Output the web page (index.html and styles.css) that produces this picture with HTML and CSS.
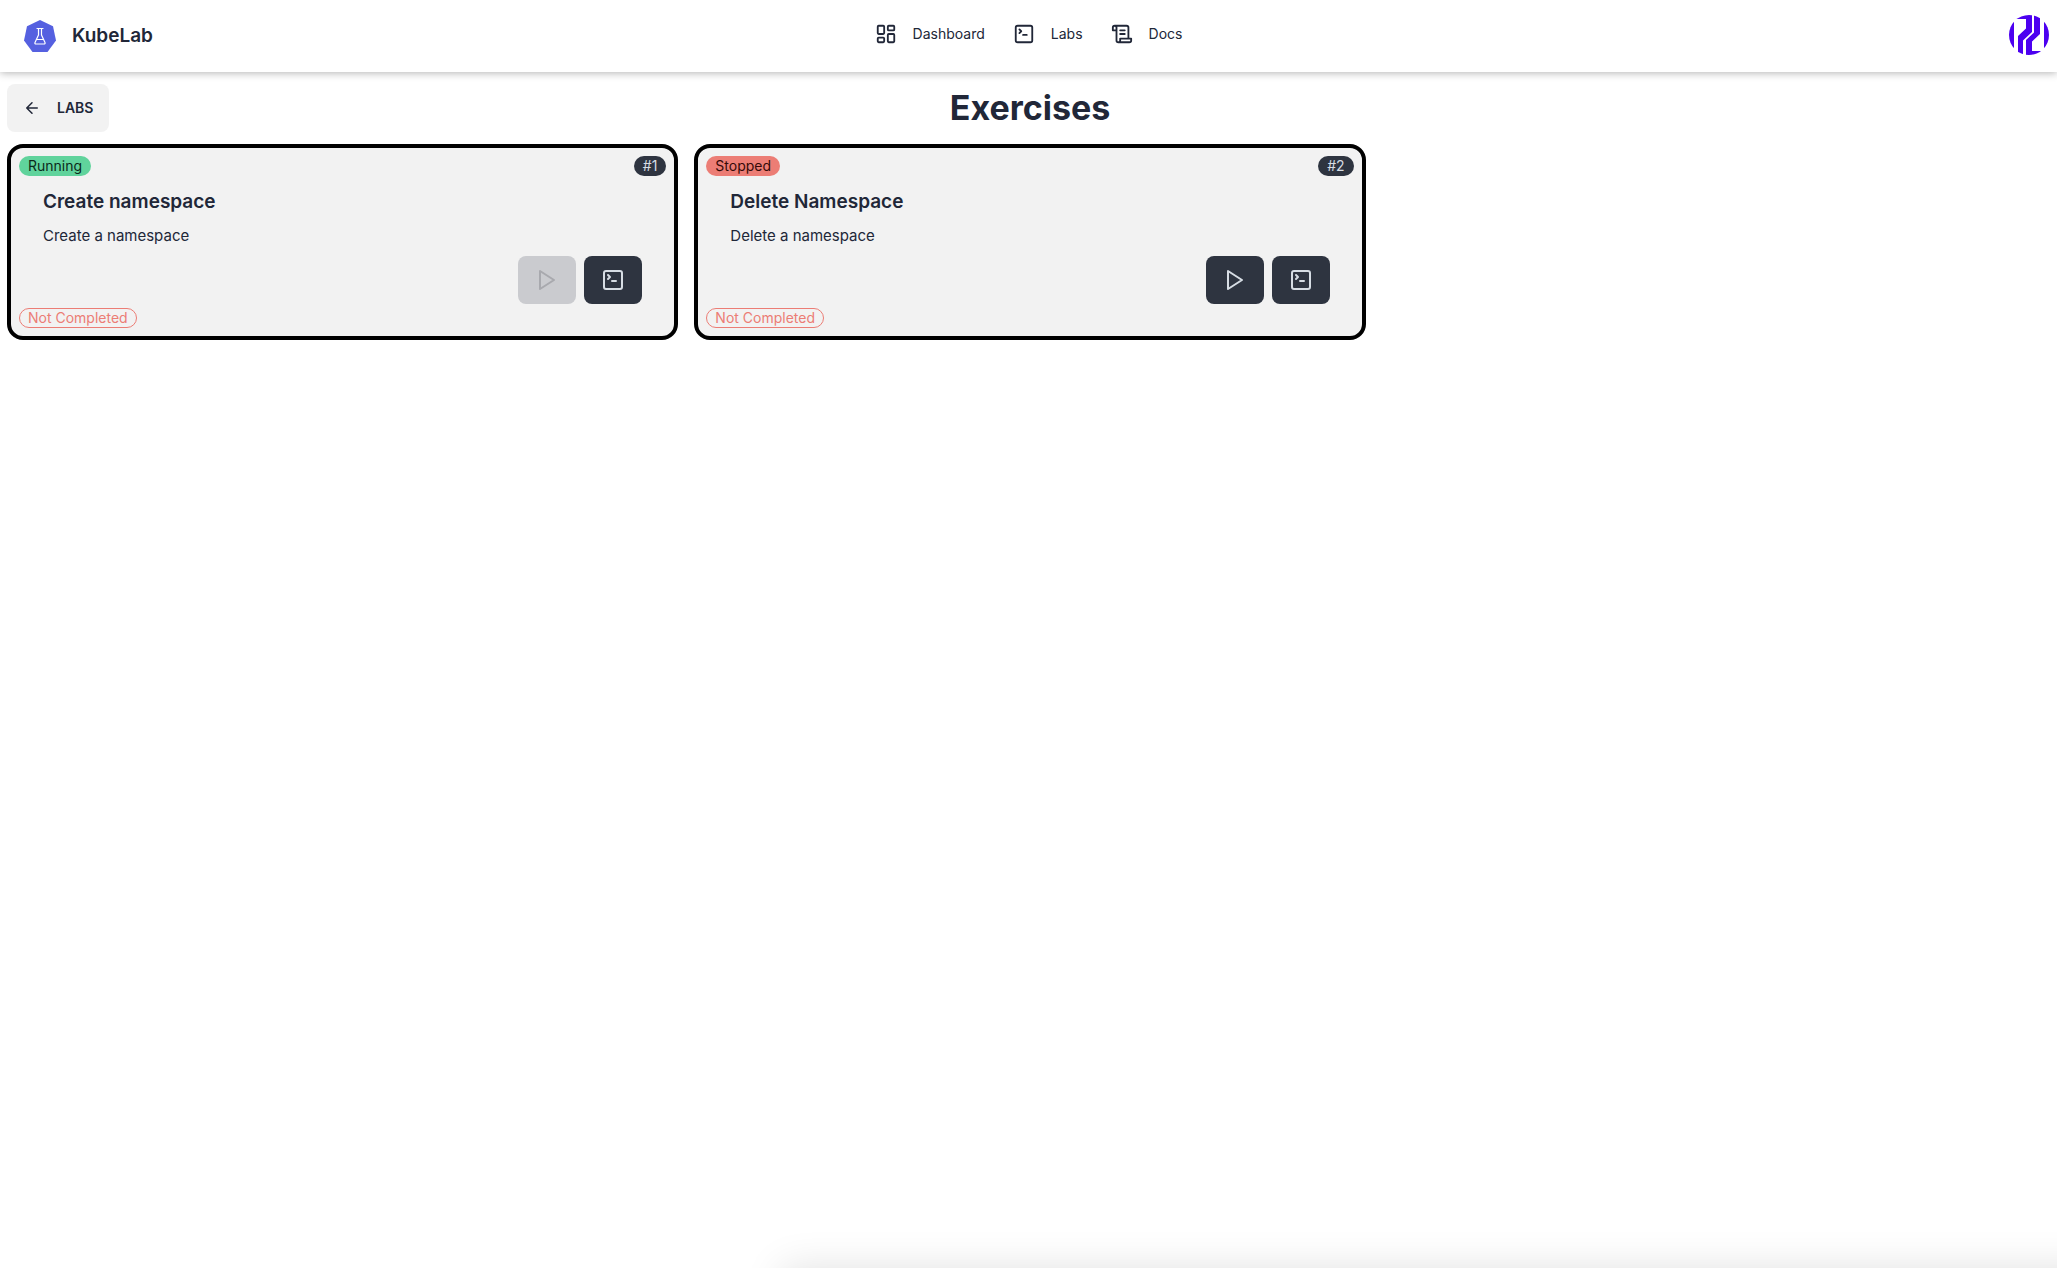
FILE: index.html
```html
<!DOCTYPE html>
<html lang="en">
<head>
<meta charset="utf-8">
<meta name="viewport" content="width=device-width, initial-scale=1">
<title>KubeLab</title>
<link rel="stylesheet" href="styles.css">
</head>
<body>
<svg class="sprite" aria-hidden="true">
  <symbol id="terminal" viewBox="0 0 24 24"><path d="m7 11 2-2-2-2M11 13h4"/><rect width="18" height="18" x="3" y="3" rx="2"/></symbol>
  <symbol id="play" viewBox="0 0 24 24"><path d="M5 3l14 9-14 9z"/></symbol>
</svg>
<header class="navbar">
  <a class="brand" href="#">
    <svg class="logo" viewBox="0 0 32 32" aria-hidden="true">
      <path fill="#5560e0" d="M16 0 29 6.300 32 20.500 23.500 32H8.500L0 20.500 3 6.300z"/>
      <path fill="none" stroke="#fff" stroke-width="1.200" d="M13 8.500h6M14.500 8.500v6.500L11 22.500q-.5 1.500 1 1.500h8q1.500 0 1-1.500L17.500 15V8.500M12.500 19.500h7"/>
    </svg>
    <span>KubeLab</span>
  </a>
  <nav class="menu">
    <a href="#"><svg class="icon" viewBox="0 0 24 24" aria-hidden="true"><rect width="7" height="9" x="3" y="3" rx="1"/><rect width="7" height="5" x="14" y="3" rx="1"/><rect width="7" height="9" x="14" y="12" rx="1"/><rect width="7" height="5" x="3" y="16" rx="1"/></svg>Dashboard</a>
    <a href="#"><svg class="icon" aria-hidden="true"><use href="#terminal"/></svg>Labs</a>
    <a href="#"><svg class="icon" viewBox="0 0 24 24" aria-hidden="true"><path d="M8 21h12a2 2 0 0 0 2-2v-2H10v2a2 2 0 1 1-4 0V5a2 2 0 1 0-4 0v3h4M19 17V5a2 2 0 0 0-2-2H4M15 8h-5M15 12h-5"/></svg>Docs</a>
  </nav>
  <button class="avatar" type="button" aria-label="Account">
    <svg viewBox="0 0 40 40" aria-hidden="true">
      <clipPath id="round"><circle cx="20" cy="20" r="20"/></clipPath>
      <g clip-path="url(#round)" fill="#4c00f0">
        <path d="M0 0h5v40H0zM35 0h5v40h-5zM5 0h18v17L14 25.500V40H9V21l8-7.500V4H5zM25 0h6v19l-8 7.500V36h12v4H17V25l8-7.500z"/>
      </g>
    </svg>
  </button>
</header>
<main class="page">
  <div class="heading">
    <a class="back" href="#"><svg viewBox="0 0 24 24" aria-hidden="true"><path d="m12 19-7-7 7-7M19 12H5"/></svg>LABS</a>
    <h1>Exercises</h1>
  </div>
  <div class="cards">
    <article class="card">
      <div class="row"><span class="badge running">Running</span><span class="badge number">#1</span></div>
      <div class="body">
        <h2>Create namespace</h2>
        <p>Create a namespace</p>
        <div class="actions">
          <button type="button" disabled aria-label="Start"><svg><use href="#play"/></svg></button>
          <button type="button" aria-label="Open terminal"><svg><use href="#terminal"/></svg></button>
        </div>
      </div>
      <div class="row"><span class="badge pending">Not Completed</span></div>
    </article>
    <article class="card">
      <div class="row"><span class="badge stopped">Stopped</span><span class="badge number">#2</span></div>
      <div class="body">
        <h2>Delete Namespace</h2>
        <p>Delete a namespace</p>
        <div class="actions">
          <button type="button" aria-label="Start"><svg><use href="#play"/></svg></button>
          <button type="button" aria-label="Open terminal"><svg><use href="#terminal"/></svg></button>
        </div>
      </div>
      <div class="row"><span class="badge pending">Not Completed</span></div>
    </article>
  </div>
</main>
<div class="bottom-shadow"></div>
</body>
</html>
```
FILE: styles.css
```css
* { box-sizing: border-box; }
body {
  margin: 0;
  min-height: 100vh;
  background: #fff;
  color: #212738;
  font: 15px/24px Inter, "Liberation Sans", sans-serif;
}
a { color: inherit; text-decoration: none; }
h1, h2, p { margin: 0; }
svg { fill: none; stroke: currentColor; stroke-width: 2; stroke-linecap: round; stroke-linejoin: round; flex: none; }
.sprite { display: none; }

.navbar {
  display: grid;
  grid-template-columns: 1fr auto 1fr;
  align-items: center;
  height: 72px;
  padding: 0 8px 0 24px;
  box-shadow: 0 1px 8px rgba(0, 0, 0, .3);
}
.brand { display: flex; align-items: center; gap: 16px; font-size: 19px; line-height: 28px; font-weight: 600; }
.logo { width: 32px; height: 32px; stroke: none; }
.menu { display: flex; gap: 28px; padding: 0 16px 4px 0; font-size: 14px; line-height: 20px; }
.menu a { display: flex; align-items: center; gap: 16px; }
.icon { width: 22px; height: 22px; }
.avatar { justify-self: end; display: block; width: 40px; height: 40px; margin-bottom: 2px; padding: 0; border: 0; background: none; }
.avatar svg { display: block; width: 40px; height: 40px; stroke: none; }

.page { padding: 12px 4px 12px 7px; }
.heading { display: grid; grid-template-columns: 1fr auto 1fr; align-items: center; }
.heading h1 { font-size: 34px; line-height: 40px; font-weight: 700; }
.back {
  justify-self: start;
  display: flex;
  align-items: center;
  gap: 16px;
  height: 48px;
  padding: 0 16px;
  border-radius: 8px;
  background: #f2f2f2;
  font-size: 14px;
  font-weight: 600;
}
.back svg { width: 18px; height: 18px; }

.cards { display: grid; grid-template-columns: repeat(3, 1fr); gap: 16px; margin-top: 12px; }
.card { padding: 8px; border: 4px solid #000; border-radius: 16px; background: #f2f2f2; }
.row { display: flex; justify-content: space-between; }
.badge { height: 20px; padding: 0 8px; border: 1px solid transparent; border-radius: 10px; font-size: 14px; line-height: 18px; }
.running { background: #60d39c; color: #0b2a1a; }
.stopped { background: #ec7d75; color: #350a08; }
.number { background: #2e3440; color: #d7dde4; }
.pending { border-color: #ec7d75; color: #ec7d75; }
.body { display: flex; flex-direction: column; gap: 8px; padding: 12px 24px 4px; }
.body h2 { font-size: 19px; line-height: 28px; font-weight: 600; }
.actions { display: flex; justify-content: flex-end; gap: 8px; }
.actions button {
  display: flex;
  align-items: center;
  justify-content: center;
  width: 58px;
  height: 48px;
  padding: 0;
  border: 0;
  border-radius: 8px;
  background: #2e3440;
  color: #d7dde4;
}
.actions button:disabled { background: #cacbcf; color: #a8a9ae; }
.actions svg { width: 24px; height: 24px; }

.bottom-shadow {
  position: fixed;
  top: 100%;
  left: 38%;
  right: -80px;
  height: 80px;
  box-shadow: 0 0 40px rgba(0, 0, 0, .12);
}
```
